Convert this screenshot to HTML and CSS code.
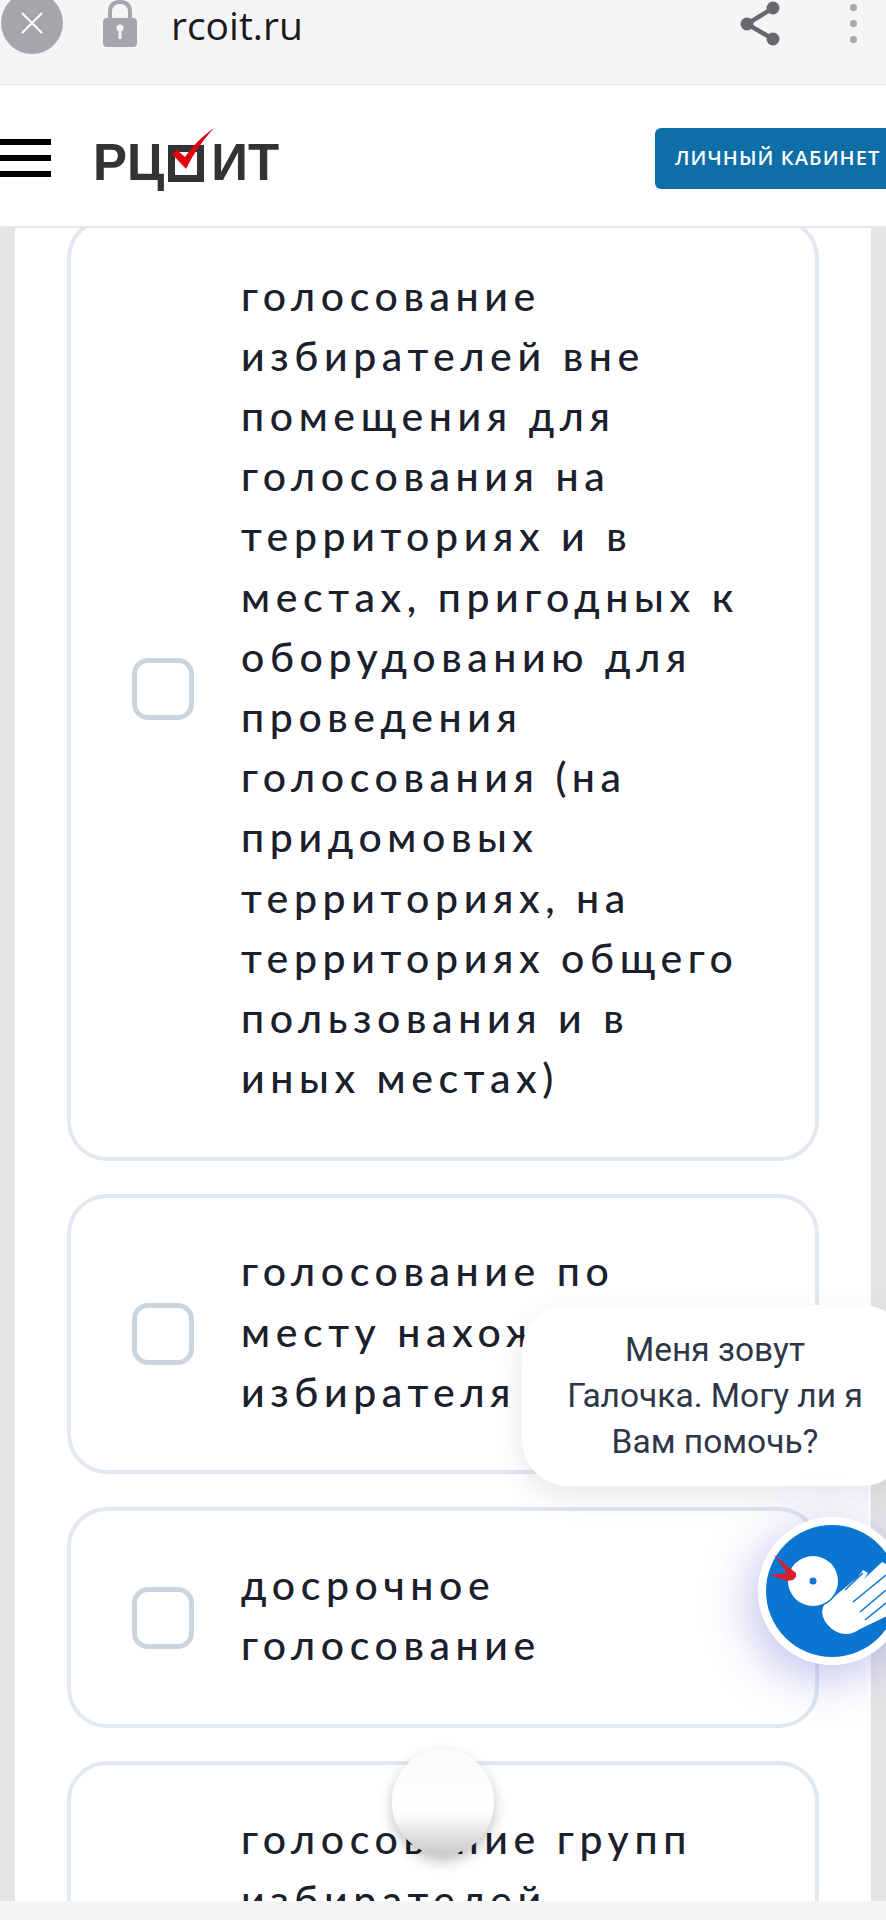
FILE: index.html
```html
<!DOCTYPE html>
<html lang="ru">
<head>
<meta charset="utf-8">
<title>rcoit.ru</title>
<link rel="stylesheet" href="styles.css">
</head>
<body>
<div class="browserbar">
  <span class="closebtn">
    <svg width="24" height="24" viewBox="0 0 24 24"><path d="M2 2L22 22M22 2L2 22" stroke="#fff" stroke-width="2" fill="none"/></svg>
  </span>
  <svg class="lock" width="36" height="48" viewBox="0 0 36 48"><path d="M8 20V12C8 5 12 2 18 2s10 3 10 10v8" fill="none" stroke="#a5a5aa" stroke-width="4"/><rect x="1" y="18" width="34" height="29" rx="4" fill="#a5a5aa"/><circle cx="18" cy="28" r="3.5" fill="#f5f5f7"/><rect x="16.5" y="28" width="3" height="11" rx="1" fill="#f5f5f7"/></svg>
  <span class="url">rcoit.ru</span>
  <svg class="share" width="40" height="46" viewBox="0 0 40 46"><path d="M33 7L7 23L33 38" fill="none" stroke="#68686e" stroke-width="4.5"/><circle cx="33" cy="7" r="6.5" fill="#68686e"/><circle cx="7" cy="23" r="6.5" fill="#68686e"/><circle cx="33" cy="38" r="6.5" fill="#68686e"/></svg>
  <span class="dots"><i></i><i></i><i></i></span>
</div>

<header class="sitehead">
  <span class="burger"><i></i><i></i><i></i></span>
  <span class="logo">
    <span class="logo-a">РЦ</span>
    <span class="logo-box"></span>
    <span class="logo-b">ИТ</span>
    <svg class="logo-check" width="44" height="44" viewBox="0 0 44 44"><path d="M1 27L6 23L14 30C22 18 32 9 43 1C33 12 24 24 15 42Z" fill="#e3000f"/></svg>
  </span>
  <a class="cabinet">ЛИЧНЫЙ КАБИНЕТ</a>
</header>

<main class="gutter">
  <div class="panel">
    <div class="card">
      <span class="box"></span>
      <p class="label">голосование избирателей вне помещения для голосования на территориях и в местах, пригодных к оборудованию для проведения голосования (на придомовых территориях, на территориях общего пользования и в иных местах)</p>
    </div>
    <div class="card">
      <span class="box"></span>
      <p class="label">голосование по месту нахождения избирателя</p>
    </div>
    <div class="card">
      <span class="box"></span>
      <p class="label">досрочное голосование</p>
    </div>
    <div class="card card-tall">
      <span class="box"></span>
      <p class="label">голосование групп избирателей</p>
    </div>
  </div>
</main>
<div class="bottombar"></div>

<div class="bubble">Меня зовут Галочка. Могу ли я Вам помочь?</div>
<div class="avatar">
  <svg width="148" height="148" viewBox="0 0 148 148">
    <circle cx="74" cy="74" r="74" fill="#fff"/>
    <circle cx="74" cy="74" r="66" fill="#0b76d1"/>
    <path d="M66 88L100 60L105 53L110 56L106 62L124 45L130 48L148 40V90L102 112Q88 122 74 112Q60 100 66 88Z" fill="#fff"/>
    <path d="M87 73L105 56M95 85L128 58M102 95L128 73M107 103L128 86" stroke="#0b76d1" stroke-width="1.5" fill="none"/>
    <circle cx="55" cy="64" r="26.5" fill="#0b76d1"/>
    <circle cx="55" cy="64" r="25" fill="#fff"/>
    <circle cx="55" cy="64" r="3.5" fill="#0b76d1"/>
    <path d="M16 38L38 56L38 60L35 63L29 64L12 58L29 56Z" fill="#d8202c"/>
  </svg>
</div>
<div class="ball"></div>
</body>
</html>
```

FILE: styles.css
```css
* { box-sizing: border-box; }
html, body { margin: 0; padding: 0; }
body {
  position: relative;
  width: 886px;
  height: 1920px;
  overflow: hidden;
  display: flex;
  flex-direction: column;
  background: #fff;
  font-family: "Noto Sans", sans-serif;
}

.browserbar {
  height: 85px;
  flex: none;
  display: flex;
  align-items: flex-start;
  background: #f5f5f7;
  border-bottom: 1px solid #e2e2e4;
  overflow: hidden;
}
.closebtn {
  flex: none;
  width: 62px;
  height: 62px;
  margin: -8px 0 0 1px;
  border-radius: 50%;
  background: #a5a5aa;
  display: flex;
  align-items: center;
  justify-content: center;
}
.lock { flex: none; margin: 0 0 0 39px; }
.url {
  margin: 0 0 0 33px;
  font: 400 39px/50px "Open Sans", sans-serif;
  color: #1b1b1e;
}
.share { flex: none; margin: 1px 0 0 auto; }
.dots {
  flex: none;
  display: flex;
  flex-direction: column;
  gap: 9px;
  margin: 4px 29px 0 70px;
}
.dots i { width: 7px; height: 7px; border-radius: 50%; background: #a5a5aa; }

.sitehead {
  height: 143px;
  flex: none;
  display: flex;
  align-items: flex-start;
  background: #fff;
  border-bottom: 2px solid #e8e8e8;
}
.burger {
  flex: none;
  width: 51px;
  display: flex;
  flex-direction: column;
  gap: 10px;
  margin-top: 54px;
}
.burger i { height: 6px; background: #000; }
.logo {
  position: relative;
  flex: none;
  display: flex;
  align-items: center;
  height: 52px;
  margin: 52px 0 0 42px;
  font: 700 51px/52px "Liberation Sans", sans-serif;
  color: #333;
}
.logo-box {
  width: 36px;
  height: 37px;
  margin: 0 7px 0 4px;
  border: 7px solid #333;
}
.logo-check { position: absolute; left: 78px; top: -10px; }
.cabinet {
  flex: none;
  margin: 43px -30px 0 auto;
  width: 261px;
  height: 61px;
  padding-left: 20px;
  border-radius: 6px;
  background: #0d6ea8;
  color: #fff;
  font: 600 20px/60px "Open Sans", sans-serif;
  letter-spacing: 1.1px;
  white-space: nowrap;
}

.gutter {
  flex: 1;
  min-height: 0;
  overflow: hidden;
  padding: 0 15px;
  background: #e5e5e5;
}
.panel {
  height: 100%;
  padding: 0 52px;
  background: #fff;
  overflow: hidden;
}
.card {
  display: flex;
  align-items: center;
  gap: 47px;
  padding: 46px 66px 46px 61px;
  margin-bottom: 33px;
  border: 4px solid #e2e8f0;
  border-radius: 40px;
  background: #fff;
}
.card:first-child { margin-top: -10px; }
.card-tall { align-items: flex-start; padding-top: 47px; min-height: 400px; }
.card-tall .box { margin-top: 160px; }
.box {
  flex: none;
  width: 62px;
  height: 62px;
  border: 5px solid #cbd5e0;
  border-radius: 16px;
}
.label {
  margin: -2.5px 0 2.5px;
  font: 500 41px/60.2px "Lato", "Noto Sans", sans-serif;
  letter-spacing: 5.6px;
  color: #1a202c;
}

.bottombar { height: 19px; flex: none; background: #f5f5f5; }

.bubble {
  position: absolute;
  left: 522px;
  top: 1305px;
  width: 386px;
  height: 181px;
  padding: 22px 40px 0;
  border-radius: 46px;
  background: #fff;
  box-shadow: 0 10px 30px rgba(60, 60, 90, 0.12);
  font: 400 33.5px/46px "Roboto", sans-serif;
  color: #2d3748;
  text-align: center;
}
.avatar {
  position: absolute;
  left: 758px;
  top: 1517px;
  width: 148px;
  height: 148px;
  border-radius: 50%;
  box-shadow: -6px 12px 50px rgba(70, 70, 200, 0.35);
}
.ball {
  position: absolute;
  left: 392px;
  top: 1749px;
  width: 102px;
  height: 106px;
  border-radius: 50%;
  background: linear-gradient(#fafafa 0%, #fff 60%, #c9c9cc 100%);
  box-shadow: 0 6px 14px rgba(0, 0, 0, 0.25);
}
```
